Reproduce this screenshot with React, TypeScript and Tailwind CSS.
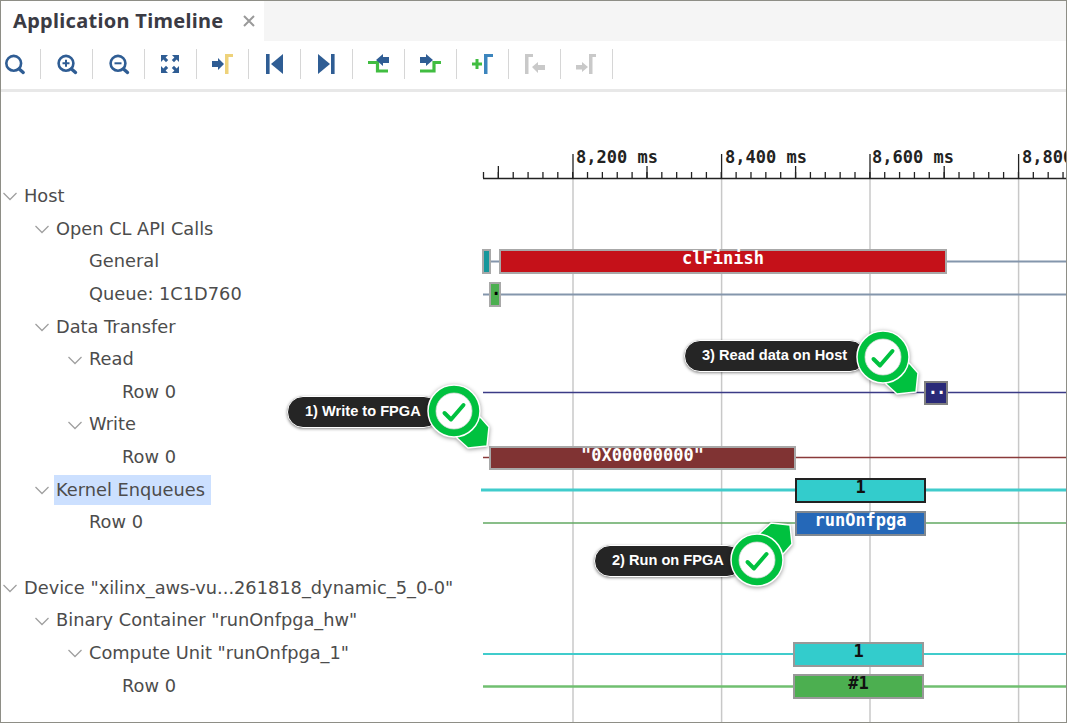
import React from 'react';

const BLUE = '#2f5d94';
const GREEN = '#41bd41';
const GRAY = '#c9c9c9';

const Glass = ({ cx, children }: { cx: number; children?: React.ReactNode }) => (
  <>
    <circle cx={cx} cy={11.3} r={7.4} fill="none" stroke={BLUE} strokeWidth={2.6} />
    <path d={`M${cx + 5.5} 17 L${cx + 9.5} 20.5`} stroke={BLUE} strokeWidth={3.4} strokeLinecap="round" />
    {children}
  </>
);

const toolbarIcons: React.ReactNode[] = [
  <Glass cx={11.7} />,
  <Glass cx={12}>
    <path d="M8.5 11.3h7M12 7.8v7" stroke={BLUE} strokeWidth={2} />
  </Glass>,
  <Glass cx={12}>
    <path d="M8.5 11.3h7" stroke={BLUE} strokeWidth={2} />
  </Glass>,
  <>
    <path d="M3 3h7l-2.400 2.400 2.600 2.600-2.200 2.200-2.600-2.600L3 10z" fill={BLUE} />
    <path d="M21 3h-7l2.400 2.400-2.600 2.600 2.200 2.200 2.600-2.600L21 10z" fill={BLUE} />
    <path d="M3 21h7l-2.400-2.400 2.600-2.600-2.200-2.200-2.600 2.600L3 14z" fill={BLUE} />
    <path d="M21 21h-7l2.400-2.400-2.600-2.600 2.200-2.200 2.600 2.600L21 14z" fill={BLUE} />
  </>,
  <>
    <path d="M2 9h6V6l6 6-6 6v-3H2z" fill={BLUE} />
    <path d="M15 22V2h8v3h-4.500v17z" fill="#eed27a" />
  </>,
  <>
    <rect x={4} y={2} width={3.6} height={20} fill={BLUE} />
    <path d="M9 12 21 2v20z" fill={BLUE} />
  </>,
  <>
    <rect x={17} y={2} width={3.6} height={20} fill={BLUE} />
    <path d="M16 12 4 2v20z" fill={BLUE} />
  </>,
  <>
    <path d="M2 10.500h9.500V19H22" fill="none" stroke={GREEN} strokeWidth={3.2} />
    <path d="M10 8l7-6v3h6v6h-6v3z" fill={BLUE} />
  </>,
  <>
    <path d="M2 19h14V10.500h7" fill="none" stroke={GREEN} strokeWidth={3.2} />
    <path d="M2 5h6V2l7 6-7 6v-3H2z" fill={BLUE} />
  </>,
  <>
    <path d="M2 12h10M7 7v10" stroke={GREEN} strokeWidth={3} />
    <path d="M14 22V2h9v3h-5.500v17z" fill="#3c85bd" />
  </>,
  <>
    <path d="M3 22V2h8v3H6.500v17z" fill={GRAY} />
    <path d="M10 16l6-5v3h7v5h-7v3z" fill={GRAY} transform="translate(0 -1)" />
  </>,
  <>
    <path d="M2 14h6v-3l6 5-6 5v-2.500H2z" fill={GRAY} transform="translate(0 -1)" />
    <path d="M15 22V2h7v3h-3.500v17z" fill={GRAY} />
  </>,
];

type Row = { label?: string; indent?: string; open?: boolean; selected?: boolean };

const rows: Row[] = [
  { label: 'Host', indent: 'pl-[1px]', open: true },
  { label: 'Open CL API Calls', indent: 'pl-[33px]', open: true },
  { label: 'General', indent: 'pl-[66px]' },
  { label: 'Queue: 1C1D760', indent: 'pl-[66px]' },
  { label: 'Data Transfer', indent: 'pl-[33px]', open: true },
  { label: 'Read', indent: 'pl-[66px]', open: true },
  { label: 'Row 0', indent: 'pl-[99px]' },
  { label: 'Write', indent: 'pl-[66px]', open: true },
  { label: 'Row 0', indent: 'pl-[99px]' },
  { label: 'Kernel Enqueues', indent: 'pl-[33px]', open: true, selected: true },
  { label: 'Row 0', indent: 'pl-[66px]' },
  {},
  { label: 'Device "xilinx_aws-vu...261818_dynamic_5_0-0"', indent: 'pl-[1px]', open: true },
  { label: 'Binary Container "runOnfpga_hw"', indent: 'pl-[33px]', open: true },
  { label: 'Compute Unit "runOnfpga_1"', indent: 'pl-[66px]', open: true },
  { label: 'Row 0', indent: 'pl-[99px]' },
];

const bars = [
  { className: 'left-[1px] top-[157px] w-[9px] h-[25px] leading-[15px] bg-[#16979b] border-[#a8a8a8]', text: '' },
  { className: 'left-[18px] top-[157px] w-[448px] h-[25px] leading-[15px] bg-[#c51119] border-[#a8a8a8] text-white', text: 'clFinish' },
  { className: 'left-[8px] top-[190px] w-[12px] h-[25px] leading-[10px] bg-[#4caf50] border-[#a8a8a8] text-black', text: '.' },
  { className: 'left-[443px] top-[289px] w-[24px] h-[24px] leading-[10px] bg-[#2a2a78] border-[#808080] text-white tracking-[-2px]', text: '..' },
  { className: 'left-[8px] top-[354px] w-[307px] h-[24px] leading-[15px] bg-[#803333] border-[#a8a8a8] text-white', text: '"0X00000000"' },
  { className: 'left-[314px] top-[386px] w-[131px] h-[25px] leading-[15px] bg-[#33cccc] border-[#222222] text-[#111111]', text: '1' },
  { className: 'left-[314px] top-[419px] w-[131px] h-[25px] leading-[15px] bg-[#2568b8] border-[#808890] text-white', text: 'runOnfpga' },
  { className: 'left-[312px] top-[550px] w-[131px] h-[25px] leading-[15px] bg-[#33cccc] border-[#999999] text-[#111111]', text: '1' },
  { className: 'left-[312px] top-[582px] w-[131px] h-[25px] leading-[15px] bg-[#4caf50] border-[#999999] text-[#111111]', text: '#1' },
];

const labels = [
  { text: '8,200 ms', className: 'left-[95px]' },
  { text: '8,400 ms', className: 'left-[244px]' },
  { text: '8,600 ms', className: 'left-[391px]' },
  { text: '8,800 ms', className: 'left-[541px]' },
];

const majors = [92, 240.6, 389, 537.6];
const lines = [
  { y: 169.5, x: 2, color: '#8496ac', w: 2 },
  { y: 202.5, x: 2, color: '#8496ac', w: 2 },
  { y: 300.5, x: 2, color: '#3b3b86', w: 1.5 },
  { y: 365.5, x: 2, color: '#8a3a3a', w: 1.5 },
  { y: 398, x: 0, color: '#40cccc', w: 3 },
  { y: 431, x: 2, color: '#62a862', w: 1.5 },
  { y: 562, x: 2, color: '#40cccc', w: 2 },
  { y: 594.5, x: 2, color: '#70bf70', w: 2.5 },
];

const TimelineChart = () => {
  const ticks: React.ReactNode[] = [];
  for (let i = 0; i < 40; i++) {
    const x = 2.500 + i * 14.86;
    ticks.push(<line key={i} x1={x} x2={x} y1={80} y2={86} stroke="#222" strokeWidth={1.3} />);
  }
  return (
    <svg className="absolute inset-0 w-full h-full" viewBox="0 0 585 630">
      {majors.map((x) => (
        <line key={x} x1={x} x2={x} y1={86} y2={630} stroke="#c8c8c8" strokeWidth={1.5} />
      ))}
      {majors.map((x) => (
        <line key={`m${x}`} x1={x} x2={x} y1={62} y2={86} stroke="#222" strokeWidth={1.3} />
      ))}
      {[17.360, 166, 314.6, 463.2].map((x) => (
        <line key={`h${x}`} x1={x} x2={x} y1={74} y2={86} stroke="#222" strokeWidth={1.3} />
      ))}
      {ticks}
      <line x1={2} x2={585} y1={86.5} y2={86.5} stroke="#222" strokeWidth={1.5} />
      {lines.map((l) => (
        <line key={l.y} x1={l.x} x2={585} y1={l.y} y2={l.y} stroke={l.color} strokeWidth={l.w} />
      ))}
    </svg>
  );
};

const Callout = ({ text, className, overlap, flip }: { text: string; className: string; overlap: string; flip?: boolean }) => (
  <div className={`absolute flex items-start ${className}`}>
    <div className="mt-[15px] h-[32px] pl-[17px] pr-[18px] flex items-center rounded-full bg-[#252525] border border-white shadow-[0_1px_3px_rgba(0,0,0,0.45)] whitespace-nowrap text-[14.6px] font-bold text-white font-['Liberation_Sans',sans-serif]">
      {text}
    </div>
    <svg className={`w-[70px] h-[60px] overflow-visible drop-shadow-[0_1px_2px_rgba(0,0,0,0.4)] ${overlap}`} viewBox="0 0 70 60">
      <g transform={flip ? 'translate(0 60) scale(1 -1)' : undefined}>
        <path d="M50 30 L58 38 L65 46 L63 65 L44 67 L33 57 L30 30 Z" fill="#00c13f" stroke="#ffffff" strokeWidth={1.5} strokeLinejoin="round" />
      </g>
      <circle cx={30} cy={30} r={26} fill="#00c13f" stroke="#ffffff" strokeWidth={1.5} />
      <circle cx={30} cy={30} r={18} fill="#ffffff" stroke="#d8d8d8" strokeWidth={0.75} />
      <path d="M20.500 32 L27 38.500 L39.500 24" fill="none" stroke="#00c13f" strokeWidth={4} strokeLinecap="round" strokeLinejoin="round" />
    </svg>
  </div>
);

const App: React.FC = () => {
  return (
    <div className="relative w-[1067px] h-[723px] overflow-hidden bg-white border border-[#8e8e86] flex flex-col font-['DejaVu_Sans',sans-serif]">
      {/* Tab bar */}
      <div className="h-[40px] shrink-0 flex bg-[#f5f5f5]">
        <div className="w-[263px] flex items-center bg-white pl-[12px]">
          <span className="text-[20px] font-bold tracking-[0.3px] text-[#3b3b44] font-['Noto_Sans',sans-serif] whitespace-nowrap">Application Timeline</span>
          <svg className="ml-[19px] w-[12px] h-[12px]" viewBox="0 0 12 12">
            <path d="M1 1l10 10M11 1L1 11" stroke="#9a9a9a" strokeWidth={2} />
          </svg>
        </div>
      </div>

      {/* Toolbar */}
      <div className="h-[51px] shrink-0 flex items-center pl-[1px] pb-[3px] border-b-[3px] border-[#e8e8e8]">
        {toolbarIcons.map((icon, i) => (
          <React.Fragment key={i}>
            <svg className="w-6 h-6 shrink-0" viewBox="0 0 24 24">{icon}</svg>
            <div className="ml-[14px] mr-[13px] w-px h-[30px] bg-[#d6d6d6] shrink-0" />
          </React.Fragment>
        ))}
      </div>

      <div className="flex flex-1 min-h-0">
        {/* Tree */}
        <div className="w-[480px] shrink-0 pt-[88px] text-[17.8px] text-[#4c4c4c]">
          {rows.map((row, i) => (
            <div key={i} className={`h-[32.65px] flex items-center whitespace-nowrap ${row.indent ?? ''}`}>
              {row.label && (
                <div className="w-[22px] shrink-0">
                  {row.open && (
                    <svg className="w-4 h-4" viewBox="0 0 16 16">
                      <path d="M1.500 5L8 11.500L14.500 5" fill="none" stroke="#a0a0a0" strokeWidth={1.3} />
                    </svg>
                  )}
                </div>
              )}
              {row.label && (
                <span className={row.selected ? 'bg-[#cce0ff] h-[30px] flex items-center pl-[2px] pr-[6px] -ml-[2px]' : ''}>{row.label}</span>
              )}
            </div>
          ))}
        </div>

        {/* Timeline */}
        <div className="relative flex-1 font-['DejaVu_Sans_Mono',monospace] font-bold text-[17px] leading-[17px]">
          <TimelineChart />
          {labels.map((l) => (
            <div key={l.text} className={`absolute top-[57px] text-[#222222] whitespace-nowrap ${l.className}`}>
              {l.text}
            </div>
          ))}
          {bars.map((b, i) => (
            <div key={i} className={`absolute border-2 text-center whitespace-pre ${b.className}`}>
              {b.text}
            </div>
          ))}
        </div>
      </div>

      <Callout text="1) Write to FPGA" className="left-[286px] top-[380px]" overlap="-ml-[16px]" />
      <Callout text="3) Read data on Host" className="left-[683px] top-[324px]" overlap="-ml-[13px] mt-[2px]" />
      <Callout text="2) Run on FPGA" className="left-[593px] top-[529px]" overlap="-ml-[16px]" flip />
    </div>
  );
};

export default App;
